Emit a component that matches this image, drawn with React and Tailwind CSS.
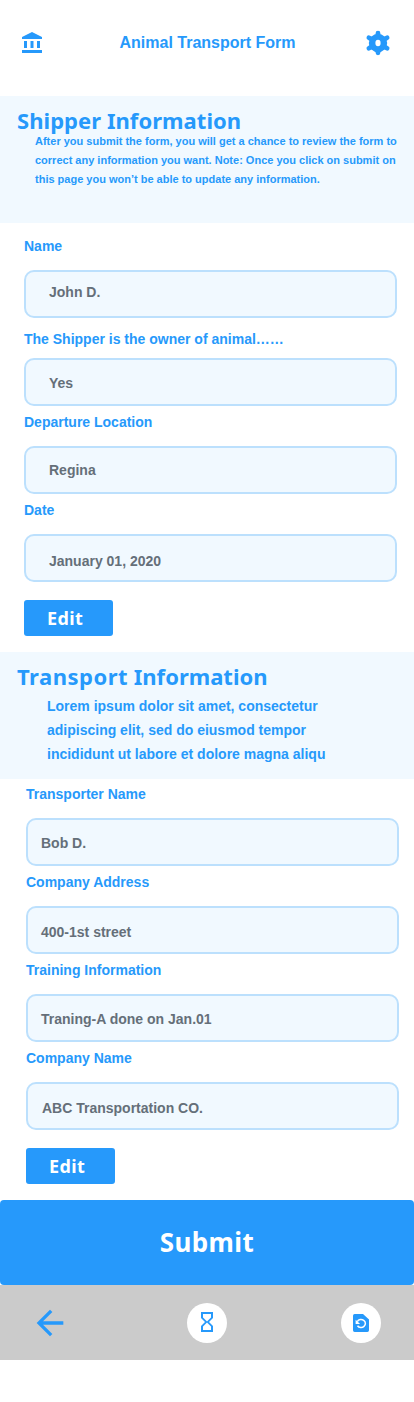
import { MdAccountBalance, MdArrowBack, MdHourglassEmpty } from 'react-icons/md';

function GearIcon() {
  return (
    <svg className="h-[26px] w-[26px]" viewBox="-13 -13 26 26" aria-hidden="true">
      <circle r="9.2" fill="currentColor" />
      <path
        d="M0-9.8V9.8M-9.1-5.3L9.1 5.3M-9.1 5.3L9.1-5.3"
        fill="none"
        stroke="currentColor"
        strokeWidth="4.8"
        strokeLinecap="round"
      />
      <ellipse rx="2.6" ry="3.2" fill="#fff" />
    </svg>
  );
}

function RestorePageIcon() {
  return (
    <svg className="h-[18px] w-4" viewBox="0 0 16 18" aria-hidden="true">
      <path
        fill="currentColor"
        d="M2 0h8l6 5.400V16.200a1.900 1.800 0 0 1-2 1.800H2a1.900 1.800 0 0 1-2-1.800V1.800A1.900 1.800 0 0 1 2 0z"
      />
      <path d="M4.300 7.600A4.300 4 0 1 1 4.500 11.700" fill="none" stroke="#fff" strokeWidth="1.5" />
      <path d="M2.600 5.800v4.200h4.500z" fill="#fff" />
    </svg>
  );
}

function Label({ className = '', children }) {
  return <div className={`text-sm leading-5 font-bold text-[#2699fb] ${className}`}>{children}</div>;
}

function Field({ className = '', children }) {
  return (
    <div
      className={`h-12 w-[373px] rounded-[10px] border-2 border-[#bce0fd] bg-[#f1f9ff] text-sm leading-5 font-bold text-[#656f79] ${className}`}
    >
      {children}
    </div>
  );
}

function EditButton({ className = '' }) {
  return (
    <button
      className={`block h-9 w-[89px] rounded-[3px] bg-[#2699fb] pl-[23px] text-left font-['Noto_Sans',sans-serif] text-lg leading-9 font-bold tracking-[0.4px] text-white ${className}`}
    >
      Edit
    </button>
  );
}

const headingClass = "font-['Noto_Sans',sans-serif] text-[22px] leading-[25px] font-bold whitespace-nowrap";

export default function App() {
  return (
    <div className="h-[1402px] w-[414px] overflow-hidden bg-white font-['Liberation_Sans',Arial,sans-serif] text-[#2699fb]">
      <header className="flex h-24 items-center justify-between pr-[23px] pb-[11px] pl-5">
        <MdAccountBalance className="mt-px h-6 w-6" />
        <h1 className="ml-[6px] text-base leading-6 font-bold whitespace-nowrap">Animal Transport Form</h1>
        <GearIcon />
      </header>

      <section className="h-[127px] bg-[#f1f9ff] pt-3 pl-[17px]">
        <h2 className={`${headingClass} tracking-[0.05px]`}>Shipper Information</h2>
        <p className="-mt-px pl-[18px] text-[11px] leading-[19px] font-bold whitespace-nowrap">
          After you submit the form, you will get a chance to review the form to
          <br />
          correct any information you want. Note: Once you click on submit on
          <br />
          this page you won’t be able to update any information.
        </p>
      </section>

      <section className="flex h-[429px] flex-col pt-[13px] pl-6">
        <Label>Name</Label>
        <Field className="mt-3.5 pt-2.5 pl-[23px]">John D.</Field>
        <Label className="mt-[11px]">The Shipper is the owner of animal……</Label>
        <Field className="mt-[9px] pt-[13px] pl-[23px]">Yes</Field>
        <Label className="mt-1.5">Departure Location</Label>
        <Field className="mt-3.5 pt-3 pl-[23px]">Regina</Field>
        <Label className="mt-1.5">Date</Label>
        <Field className="mt-3.5 pt-[15px] pl-[23px]">January 01, 2020</Field>
        <EditButton className="mt-[18px]" />
      </section>

      <section className="h-[127px] bg-[#f1f9ff] pt-3 pl-[17px]">
        <h2 className={headingClass}>
          <span className="tracking-[0.5px]">Transport</span> Information
        </h2>
        <p className="mt-[5px] pl-[30px] text-sm leading-6 font-bold whitespace-nowrap">
          Lorem ipsum dolor sit amet, consectetur
          <br />
          adipiscing elit, sed do eiusmod tempor
          <br />
          incididunt ut labore et dolore magna aliqu
        </p>
      </section>

      <section className="flex h-[421px] flex-col pt-[5px] pl-[26px]">
        <Label>Transporter Name</Label>
        <Field className="mt-3.5 pt-[13px] pl-[13px]">Bob D.</Field>
        <Label className="mt-1.5">Company Address</Label>
        <Field className="mt-3.5 pt-3.5 pl-[13px]">400-1st street</Field>
        <Label className="mt-1.5">Training Information</Label>
        <Field className="mt-3.5 pt-[13px] pl-[13px]">Traning-A done on Jan.01</Field>
        <Label className="mt-1.5">Company Name</Label>
        <Field className="mt-3.5 pt-3.5 pl-3.5">ABC Transportation CO.</Field>
        <EditButton className="mt-[18px]" />
      </section>

      <div className="bg-[#fff]">
        <button className="block h-[85px] w-full rounded-[4px] bg-[#2699fb] text-center font-['Noto_Sans',sans-serif] text-[26px] font-bold tracking-[0.4px] text-white">
          Submit
        </button>
      </div>

      <nav className="flex h-[75px] items-center justify-between bg-[#cbcbcb] pr-[33px] pl-[30px]">
        <MdArrowBack className="h-10 w-10" />
        <div className="ml-[3px] flex h-10 w-10 items-center justify-center rounded-full bg-white">
          <MdHourglassEmpty className="mb-px h-6 w-6" />
        </div>
        <div className="flex h-10 w-10 items-center justify-center rounded-full bg-white">
          <RestorePageIcon />
        </div>
      </nav>
    </div>
  );
}
